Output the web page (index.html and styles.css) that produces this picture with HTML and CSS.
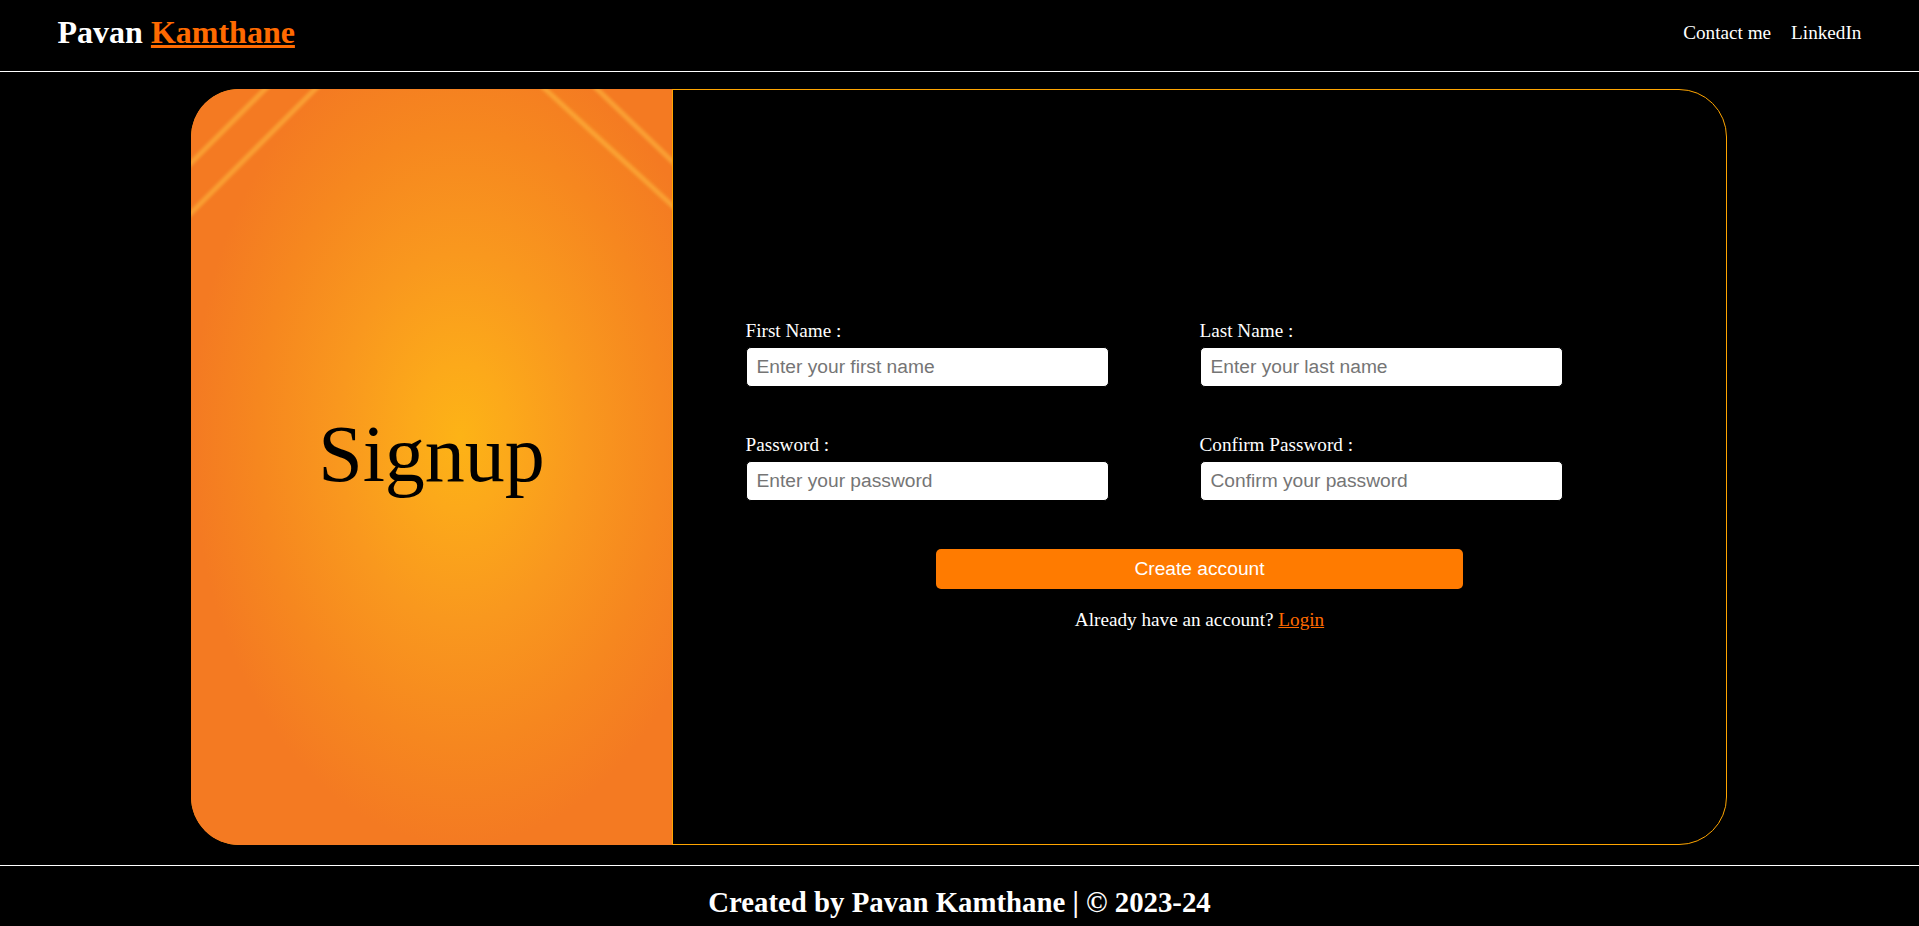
FILE: index.html
```html
<!DOCTYPE html>
<html lang="en">
<head>
<meta charset="utf-8">
<title>Signup</title>
<link rel="stylesheet" href="styles.css">
</head>
<body>
<header class="topbar">
  <div class="brand">Pavan <a href="#" class="brand-accent">Kamthane</a></div>
  <nav class="nav">
    <a href="#">Contact me</a>
    <a href="#">LinkedIn</a>
  </nav>
</header>
<main class="card">
  <div class="card-art">
    <svg class="art-stripes" viewBox="0 0 480 756" preserveAspectRatio="none" aria-hidden="true">
      <defs>
        <filter id="soft" x="-10%" y="-10%" width="120%" height="120%"><feGaussianBlur stdDeviation="1.4"/></filter>
      </defs>
      <g stroke="#ffc445" stroke-width="5" opacity=".5" filter="url(#soft)">
        <line x1="-5" y1="79" x2="79" y2="-5"/>
        <line x1="-5" y1="129" x2="129" y2="-5"/>
        <line x1="350" y1="-3" x2="484" y2="120"/>
        <line x1="402" y1="-3" x2="484" y2="76"/>
      </g>
    </svg>
    <h1 class="art-title">Signup</h1>
  </div>
  <div class="card-form">
    <form class="form">
      <div class="form-grid">
        <div class="field">
          <label for="fn">First Name :</label>
          <input id="fn" type="text" placeholder="Enter your first name">
        </div>
        <div class="field">
          <label for="ln">Last Name :</label>
          <input id="ln" type="text" placeholder="Enter your last name">
        </div>
        <div class="field">
          <label for="pw">Password :</label>
          <input id="pw" type="password" placeholder="Enter your password">
        </div>
        <div class="field">
          <label for="cpw">Confirm Password :</label>
          <input id="cpw" type="password" placeholder="Confirm your password">
        </div>
      </div>
      <button type="button" class="submit">Create account</button>
      <p class="switch">Already have an account? <a href="#">Login</a></p>
    </form>
  </div>
</main>
<footer class="footer">Created by Pavan Kamthane | © 2023-24</footer>
</body>
</html>
```

FILE: styles.css
```css
body {
  margin: 0;
  background: #000;
  color: #fff;
  font-family: "Liberation Serif", "Times New Roman", serif;
}

.topbar {
  display: flex;
  justify-content: space-between;
  align-items: center;
  height: 65px;
  padding: 0 3% 6px;
  border-bottom: 1px solid #fff;
}

.brand {
  font-size: 32px;
  font-weight: bold;
}

.brand-accent {
  color: #ff6a00;
  text-decoration: underline;
}

.nav {
  display: flex;
  gap: 20px;
  font-size: 19.2px;
}

.nav a {
  color: #fff;
  text-decoration: none;
}

.card {
  box-sizing: border-box;
  width: 1536px;
  height: 756px;
  margin: 17px 0 0 191px;
  border: 1px solid #ffa500;
  border-radius: 48px;
  display: flex;
}

.card-art {
  position: relative;
  box-sizing: border-box;
  flex: 0 0 482px;
  margin: -1px 0 -1px -1px;
  border-right: 1px solid #ffa500;
  border-radius: 48px 0 0 48px;
  overflow: hidden;
  display: flex;
  align-items: center;
  justify-content: center;
  padding-bottom: 25px;
  background: radial-gradient(ellipse farthest-side at 56% 46%, #fdb316 0%, #fca91a 18%, #f9981e 45%, #f6871f 75%, #f47a22 100%);
}

.art-stripes {
  position: absolute;
  top: 0;
  left: 0;
  width: 481px;
  height: 756px;
}

.art-title {
  position: relative;
  margin: 0;
  font-size: 80px;
  font-weight: normal;
  color: #000;
}

.card-form {
  flex: 1;
  display: flex;
  flex-direction: column;
  justify-content: center;
  align-items: center;
  padding-top: 17px;
}

.form {
  width: 908px;
  display: flex;
  flex-direction: column;
  align-items: center;
}

.form-grid {
  width: 100%;
  display: grid;
  grid-template-columns: 1fr 1fr;
  row-gap: 47.8px;
}

.field {
  display: flex;
  flex-direction: column;
  gap: 5px;
}

.field label {
  font-size: 19.2px;
}

.field input {
  box-sizing: border-box;
  width: 80%;
  height: 39.4px;
  margin: 0;
  padding: 0 10px;
  border: 1px solid #000;
  border-radius: 5px;
  background: #fff;
  color: #000;
  font: 19.2px "Liberation Sans", Arial, sans-serif;
  outline: none;
}

.field input::placeholder {
  color: #757575;
}

.submit {
  width: 527px;
  height: 39.4px;
  margin-top: 48.5px;
  border: none;
  border-radius: 5px;
  background: #ff7b00;
  color: #fff;
  font: 19.2px "Liberation Sans", Arial, sans-serif;
  cursor: pointer;
}

.switch {
  margin: 20px 0 0;
  font-size: 19.2px;
}

.switch a {
  color: #ff6a00;
}

.footer {
  margin-top: 20px;
  border-top: 1px solid #fff;
  padding: 20px 0 6px;
  text-align: center;
  font-size: 28.8px;
  font-weight: bold;
}
```
